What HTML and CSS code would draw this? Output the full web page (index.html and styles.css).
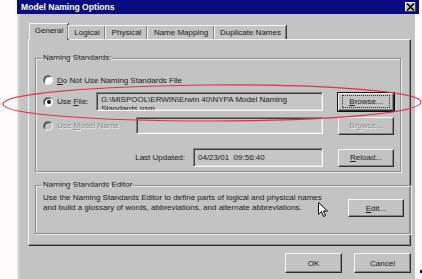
FILE: index.html
```html
<!DOCTYPE html>
<html lang="en">
<head>
  <meta charset="UTF-8">
  <title>Model Naming Options</title>
  <link rel="stylesheet" href="styles.css">
</head>
<body>
  <div class="page">
    <div class="dialog">
      <div class="titlebar">
        <span class="title">Model Naming Options</span>
        <span class="close">
          <svg width="9" height="8" viewBox="0 0 9 8"><path d="M1 0.5 L8 7.5 M8 0.5 L1 7.5" stroke="#000" stroke-width="1.6"/></svg>
        </span>
      </div>
      <div class="dialog-body">
        <div class="tabs">
          <div class="tab active">General</div>
          <div class="tab w-logical">Logical</div>
          <div class="tab w-physical">Physical</div>
          <div class="tab w-mapping">Name Mapping</div>
          <div class="tab w-dup">Duplicate Names</div>
        </div>
        <div class="panel">
          <fieldset class="group group-standards">
            <legend>Naming Standards:</legend>
            <div class="row row-first">
              <span class="radio"></span>
              <span class="label"><u>D</u>o Not Use Naming Standards File</span>
            </div>
            <div class="row row-file">
              <span class="radio checked"></span>
              <span class="label">Use <u>F</u>ile:</span>
              <div class="field field-file">G:\MISPOOL\ERWIN\Erwin 40\NYPA Model Naming Standards.nsm</div>
              <button type="button" class="btn focused"><span class="focus-ring"><u>B</u>rowse...</span></button>
            </div>
            <div class="row row-model">
              <span class="radio disabled"></span>
              <span class="label disabled">Use <u>M</u>odel Name</span>
              <div class="field field-model"></div>
              <button type="button" class="btn disabled">Br<u>o</u>wse...</button>
            </div>
            <div class="row row-updated">
              <div class="updated">
                <span class="label">Last Updated:</span>
                <div class="field field-date">04/23/01&nbsp; 09:56:40</div>
              </div>
              <button type="button" class="btn"><u>R</u>eload...</button>
            </div>
          </fieldset>
          <fieldset class="group group-editor">
            <legend>Naming Standards Editor</legend>
            <div class="row row-editor">
              <p class="desc">Use the Naming Standards Editor to define parts of logical and physical names and build a glossary of words, abbreviations, and alternate abbreviations.</p>
              <button type="button" class="btn btn-edit"><u>E</u>dit...</button>
            </div>
          </fieldset>
        </div>
        <div class="actions">
          <button type="button" class="btn btn-wide">OK</button>
          <button type="button" class="btn btn-wide">Cancel</button>
        </div>
      </div>
    </div>

    <svg class="markup" width="422" height="279" viewBox="0 0 422 279">
      <path d="M212 85 C 330 84, 421 92, 421 102 C 421 113, 330 121, 212 121 C 90 121, 3 114, 3 104 C 3 94, 90 86, 212 85 Z" fill="none" stroke="#e0304a" stroke-width="1.2"/>
    </svg>
    <svg class="cursor" width="11" height="16" viewBox="0 0 11 16">
      <path d="M0.5 0.5 L0.5 12.5 L3.5 9.5 L5.5 14.5 L7.5 13.5 L5.5 9 L9.5 9 Z" fill="#fff" stroke="#000" stroke-width="1"/>
    </svg>
    <span class="dot"></span>
  </div>
</body>
</html>
```

FILE: styles.css
```css
body { margin: 0; background: #fdfbfc; font-family: 'Liberation Sans', Arial, sans-serif; font-size: 8px; color: #1a1a1a; }
.page { position: relative; width: 422px; height: 279px; overflow: hidden; }

.dialog {
  margin-left: 17px; width: 398px; height: 279px; background: #c3c3c3;
  box-shadow: inset 1px 0 #e6e6e6, inset 3px 0 #cfcfcf;
}
.titlebar {
  height: 14px; background: #0b0b80; color: #fff; display: flex; align-items: center;
  justify-content: space-between; padding: 0 0 0 4px; margin-right: -4px;
}
.title { font-weight: bold; font-size: 8.6px; }
.close {
  width: 11px; height: 10px; margin-right: 3px; background: #c8c8c8; display: flex;
  align-items: center; justify-content: center;
  box-shadow: inset -1px -1px #404040, inset 1px 1px #fff;
}

.dialog-body { padding: 9px 4px 0 11px; }

.tabs { display: flex; height: 16px; padding-left: 3px; position: relative; z-index: 1; }
.tab {
  width: 37px; height: 14px; margin-top: 2px; line-height: 14px; text-align: center;
  border-top: 1px solid #f4f4f4; border-left: 1px solid #f4f4f4;
  box-shadow: inset -1px 0 #808080, 1px 0 #3a3a3a; box-sizing: border-box; background: #c3c3c3;
}
.tab.active { height: 17px; margin-top: 0; margin-left: -2px; width: 39px; line-height: 14px; }
.tab.w-physical { width: 42px; }
.tab.w-mapping { width: 67px; }
.tab.w-dup { width: 72px; }

.panel {
  height: 207px; box-sizing: border-box; padding: 0 9px 0 6px;
  border: 1px solid; border-color: #f4f4f4 #2e2e2e #2e2e2e #f4f4f4;
  box-shadow: inset -1px -1px #8a8a8a;
}

.group {
  margin: 0; padding: 0 6px 0 7px; border: 1px solid #8c8c8c;
  box-shadow: 1px 1px #efefef, inset 1px 1px #efefef;
}
.group legend { padding: 0 1px; margin-left: -1px; line-height: 10px; }
.group-standards { margin-top: 13px; height: 119px; box-sizing: border-box; }
.group-editor { margin-top: 8px; height: 54px; box-sizing: border-box; }

.row { display: flex; align-items: center; }
.row-first { margin-top: 12px; height: 10px; }
.row-file { margin-top: 7px; height: 19px; }
.row-model { margin-top: 6px; height: 17px; }
.row-updated { margin-top: 14px; height: 19px; }
.row-editor { margin-top: 3px; align-items: flex-start; }

.label { margin-left: 4px; white-space: nowrap; }
.label.disabled, .btn.disabled { color: #8a8a8a; text-shadow: 1px 1px #f2f2f2; }

.radio {
  width: 10px; height: 10px; border-radius: 50%; background: #fff; flex: none; box-sizing: border-box;
  border: 1px solid; border-color: #7a7a7a #f0f0f0 #f0f0f0 #7a7a7a;
  box-shadow: inset 1px 1px #333; position: relative;
}
.radio.checked::after {
  content: ""; position: absolute; left: 2.5px; top: 2.5px; width: 4px; height: 4px;
  border-radius: 50%; background: #111;
}
.radio.disabled { background: #c3c3c3; }

.field {
  margin-left: auto; height: 19px; box-sizing: border-box; background: #c6c6c6;
  border: 1px solid; border-color: #808080 #fafafa #fafafa #808080;
  box-shadow: inset 1px 1px #404040, inset -1px -1px #d6d6d6;
  padding: 2px 4px; line-height: 9px; overflow: hidden;
}
.field-file { width: 227px; }
.field-model { width: 187px; height: 17px; }
.field-date { width: 130px; margin-left: 8px; padding-top: 4px; }
.updated { margin-left: auto; display: flex; align-items: center; }

.btn {
  font: inherit; color: #1a1a1a; background: #c3c3c3; width: 56px; height: 18px; padding: 0;
  margin-left: 15px; flex: none; border: 1px solid; border-color: #f6f6f6 #2e2e2e #2e2e2e #f6f6f6;
  box-shadow: inset -1px -1px #858585;
}
.btn.focused { outline: 1px solid #111; border-color: #f6f6f6 #2e2e2e #2e2e2e #f6f6f6; }
.focus-ring { display: inline-block; padding: 1px 6px; outline: 1px dotted #333; }
.btn-edit { margin-top: 6px; height: 18px; }

.desc { margin: 0; width: 290px; line-height: 10px; flex: none; }

.actions { display: flex; justify-content: flex-end; gap: 12px; margin-top: 7px; }
.btn-wide { width: 57px; height: 20px; margin-left: 0; }

.markup { position: absolute; left: 0; top: 0; pointer-events: none; }
.cursor { position: absolute; left: 318px; top: 202px; }
.dot { position: absolute; left: 420px; top: 270px; width: 2px; height: 3px; background: #111; }
```
